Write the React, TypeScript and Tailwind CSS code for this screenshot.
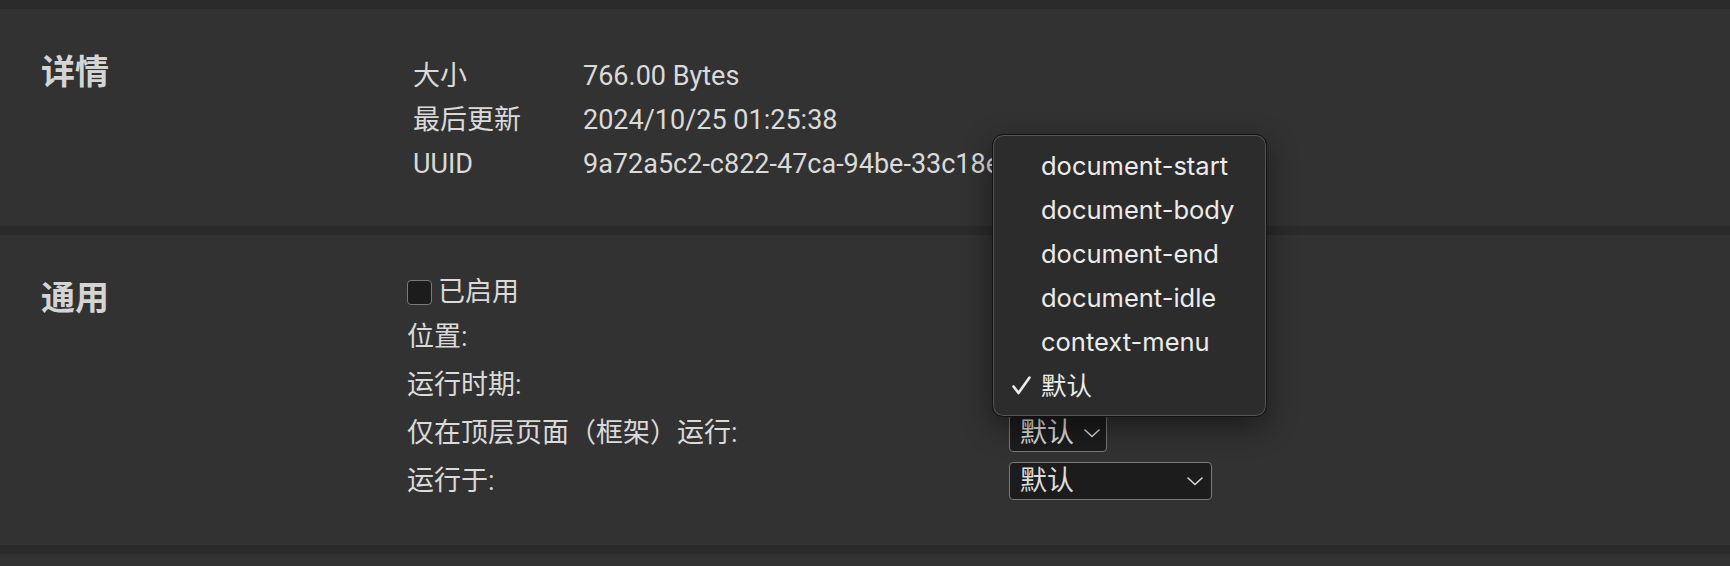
import React from 'react'

// Script settings page: "详情" + "通用" sections, with the run-at menu open

function Chevron() {
  return (
    <svg width="16" height="9" viewBox="0 0 16 9" fill="none" className="shrink-0">
      <path d="M1 1l7 6.5L15 1" stroke="#d6d6d6" strokeWidth="1.6" strokeLinecap="round" strokeLinejoin="round" />
    </svg>
  )
}

function FakeSelect({ value, wide }: { value: string; wide?: boolean }) {
  return (
    <div
      className={
        'h-[38px] flex items-center gap-[10px] pl-[10px] pr-[8px] bg-[#1c1c1c] border-[1.5px] border-[#7a7a7a] rounded-[4px] text-[27px] text-[#dcdcdc] ' +
        (wide ? 'w-[203px] justify-between' : 'w-[98px]')
      }
    >
      <span className="leading-none">{value}</span>
      <Chevron />
    </div>
  )
}

function Heading({ children }: { children: React.ReactNode }) {
  return (
    <div className="w-[407px] shrink-0 pl-[41px] mt-[5px] text-[34px] leading-[44px] font-bold text-[#d4d4d4]">
      {children}
    </div>
  )
}

const details = [
  ['大小', '766.00 Bytes'],
  ['最后更新', '2024/10/25 01:25:38'],
  ['UUID', '9a72a5c2-c822-47ca-94be-33c18e6f0b2d'],
]

const menuItems = ['document-start', 'document-body', 'document-end', 'document-idle', 'context-menu', '默认']

export default function App() {
  return (
    <div className="relative min-h-screen bg-[#2a2a2a] pt-[9px] flex flex-col gap-[9px] font-[family-name:Roboto,'Noto_Sans_CJK_SC',sans-serif] text-[#dadada]">
      {/* 详情 */}
      <section className="bg-[#323232] flex pt-[36px] pb-[40px]">
        <Heading>详情</Heading>
        <div className="mt-[9px] pl-[6px] text-[27px]">
          {details.map(([k, v]) => (
            <div key={k} className="flex h-[44px] items-center whitespace-nowrap">
              <div className="w-[170px]">{k}</div>
              <div className="max-w-[409px] overflow-hidden">{v}</div>
            </div>
          ))}
        </div>
      </section>

      {/* 通用 */}
      <section className="bg-[#323232] flex pt-[36px] pb-[40px]">
        <Heading>通用</Heading>
        <div className="text-[27px] whitespace-nowrap">
          <div className="flex h-[42px] items-center gap-[6px]">
            <span className="w-[25px] h-[25px] rounded-[4px] bg-[#1c1c1c] border-[1.5px] border-[#7a7a7a]" />
            <span>已启用</span>
          </div>
          <div className="flex h-[48px] items-center">
            <div className="w-[602px]">位置:</div>
          </div>
          <div className="flex h-[48px] items-center">
            <div className="w-[602px]">运行时期:</div>
          </div>
          <div className="flex h-[48px] items-center">
            <div className="w-[602px]">仅在顶层页面（框架）运行:</div>
            <FakeSelect value="默认" />
          </div>
          <div className="flex h-[48px] items-center">
            <div className="w-[602px]">运行于:</div>
            <FakeSelect value="默认" wide />
          </div>
        </div>
      </section>

      <section className="bg-[#323232] h-[40px]" />

      {/* open native menu */}
      <div className="absolute left-[992px] top-[134px] w-[275px] h-[283px] pt-[9px] rounded-[11px] bg-[#2c2c2c] border border-[#111] shadow-[inset_0_0_0_1px_rgba(255,255,255,0.2),0_10px_30px_rgba(0,0,0,0.45)] font-[family-name:Inter,'Noto_Sans_CJK_SC',sans-serif] text-[25.5px] text-[#ececec]">
        {menuItems.map((m, i) => (
          <div key={m} className="relative h-[44px] flex items-center pl-[48px]">
            {i === menuItems.length - 1 && (
              <svg width="19" height="19" viewBox="0 0 19 19" fill="none" className="absolute left-[19px] top-[12px]">
                <path d="M1.5 10.5l5 6.5L17.5 1.5" stroke="#ececec" strokeWidth="2.6" strokeLinecap="round" strokeLinejoin="round" />
              </svg>
            )}
            <span>{m}</span>
          </div>
        ))}
      </div>
    </div>
  )
}
